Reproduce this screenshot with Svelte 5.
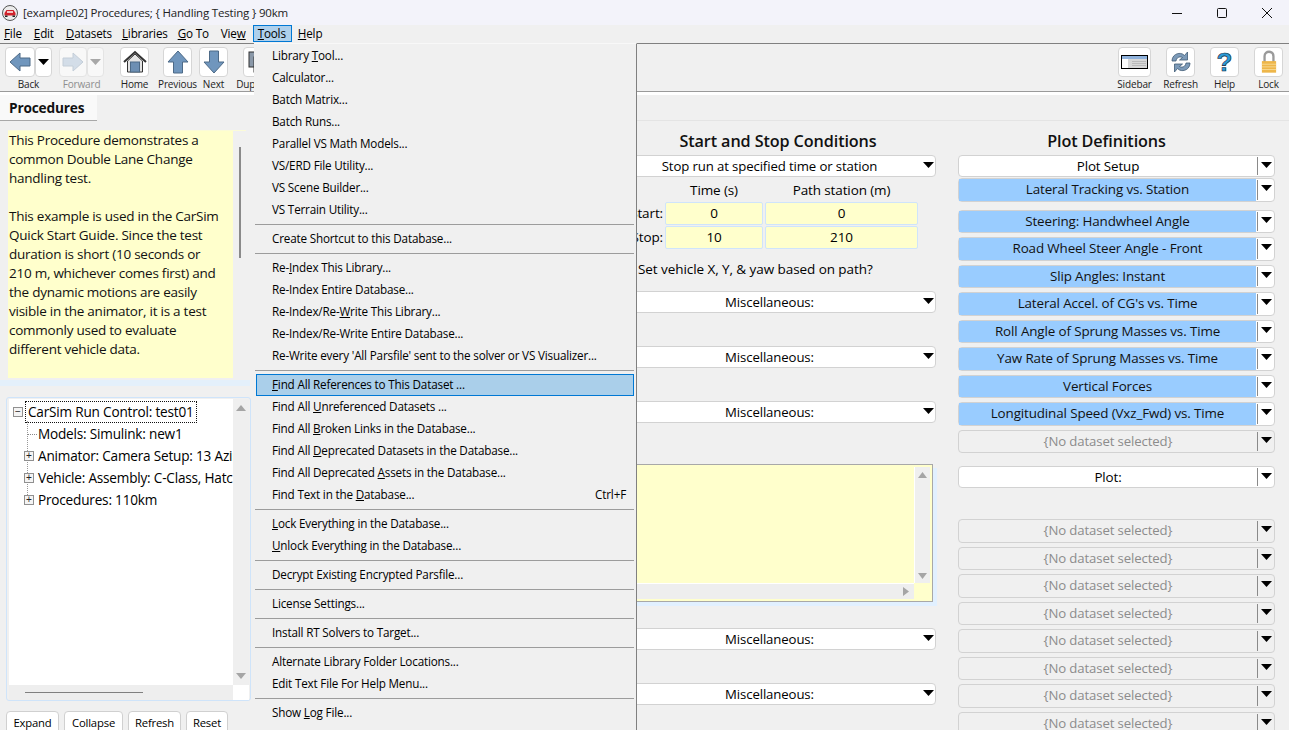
<script>
  const title = '[example02] Procedures; { Handling Testing } 90km';
  const menus = [['F','ile'],['E','dit'],['D','atasets'],['L','ibraries'],['G','o To'],['Vie','w',''],['T','ools'],['H','elp']];
  const S = 'sep';
  const items = [
    ['Library ','T','ool...'],['Calculator...'],['Batch Matrix...'],['Batch Runs...'],['Parallel VS Math Models...'],['VS/ERD File Utility...'],['VS Scene Builder...'],['VS Terrain Utility...'],S,
    ['Create Shortcut to this Database...'],S,
    ['Re-','I','ndex This Library...'],['Re-Index Entire Database...'],['Re-Index/Re-','W','rite This Library...'],['Re-Index/Re-Write Entire Database...'],["Re-Write every 'All Parsfile' sent to the solver or VS Visualizer..."],S,
    ['','F','ind All References to This Dataset ...'],['Find All ','U','nreferenced Datasets ...'],['Find All ','B','roken Links in the Database...'],['Find All ','D','eprecated Datasets in the Database...'],['Find All Deprecated ','A','ssets in the Database...'],['Find Text in the ','D','atabase...'],S,
    ['','L','ock Everything in the Database...'],['','U','nlock Everything in the Database...'],S,
    ['Decrypt Existing Encrypted Parsfile...'],S,['License Settings...'],S,['Install RT Solvers to Target...'],S,
    ['Alternate Library Folder Locations...'],['Edit Text File For Help Menu...'],S,['Show ','L','og File...']
  ];
  const plots = ['Steering: Handwheel Angle','Road Wheel Steer Angle - Front','Slip Angles: Instant',"Lateral Accel. of CG's vs. Time",'Roll Angle of Sprung Masses vs. Time','Yaw Rate of Sprung Masses vs. Time','Vertical Forces','Longitudinal Speed (Vxz_Fwd) vs. Time'];
  const none = '{No dataset selected}';
  const blanks = Array(8).fill(none);
  const descLines = ['This Procedure demonstrates a','common Double Lane Change','handling test.','','This example is used in the CarSim','Quick Start Guide. Since the test','duration is short (10 seconds or','210 m, whichever comes first) and','the dynamic motions are easily','visible in the animator, it is a test','commonly used to evaluate','different vehicle data.'];
</script>

{#snippet arrow(color = '#000')}
  <svg class="tri" width="11" height="6" viewBox="0 0 11 6"><path d="M0 0H11L5.5 6Z" fill={color}/></svg>
{/snippet}

{#snippet select(text, kind = '', divider = true)}
  <div class="select {kind}">
    <div class="val">{text}</div>
    <div class="drop" class:div={divider}>{@render arrow()}</div>
  </div>
{/snippet}

<div class="app">
  <header class="titlebar">
    <svg class="logo" width="16" height="16" viewBox="0 0 16 16">
      <circle cx="8" cy="8" r="7.5" fill="#ececec" stroke="#555"/>
      <path d="M2.5 10.5V8L4.5 5H11.5L13.5 8V10.5Z" fill="#d0202a"/>
      <rect x="5" y="6" width="6" height="2" fill="#f4c0c0"/>
      <rect x="3" y="10.5" width="2.5" height="1.5" fill="#222"/><rect x="10.5" y="10.5" width="2.5" height="1.5" fill="#222"/>
    </svg>
    <span class="wintitle">{title}</span>
    <div class="winctl">
      <svg width="12" height="12" viewBox="0 0 12 12"><path d="M1 6.5H11" stroke="#111"/></svg>
      <svg width="12" height="12" viewBox="0 0 12 12"><rect x="1.5" y="1.5" width="9" height="9" rx="1" fill="none" stroke="#111"/></svg>
      <svg width="12" height="12" viewBox="0 0 12 12"><path d="M1 1L11 11M11 1L1 11" stroke="#111"/></svg>
    </div>
  </header>

  <nav class="menubar">
    {#each menus as m, i}
      <span class="mi" class:active={m[0] === 'T'}>{#if m.length === 3}{m[0]}<u>{m[1]}</u>{:else}<u>{m[0]}</u>{m[1]}{/if}</span>
    {/each}
  </nav>

  <div class="toolbar">
    <div class="tool w47">
      <div class="pair">
        <div class="btn">
          <svg width="22" height="20" viewBox="0 0 22 20"><path d="M1 10L11 1V6H21V14H11V19Z" fill="#7096bd" stroke="#4d6a87"/></svg>
        </div>
        <div class="btn small">{@render arrow()}</div>
      </div>
      <span>Back</span>
    </div>
    <div class="tool w45 off">
      <div class="pair">
        <div class="btn">
          <svg width="22" height="20" viewBox="0 0 22 20"><path d="M21 10L11 1V6H1V14H11V19Z" fill="#d3dde8" stroke="#c4ced8"/></svg>
        </div>
        <div class="btn small">{@render arrow('#a8a8a8')}</div>
      </div>
      <span>Forward</span>
    </div>
    <div class="tool w29 g16">
      <div class="btn">
        <svg width="24" height="24" viewBox="0 0 24 24"><path d="M1 12L12 2L23 12" fill="none" stroke="#333" stroke-width="2"/><path d="M4.5 11L12 4L19.500 11V22H4.500Z" fill="#e4e4e4" stroke="#333"/><rect x="7.500" y="12" width="9" height="10" fill="#6d8fb3" stroke="#4d6a87"/></svg>
      </div>
      <span>Home</span>
    </div>
    <div class="tool w29 g14">
      <div class="btn">
        <svg width="22" height="24" viewBox="0 0 22 24"><path d="M11 1L21 12H15.500V23H6.500V12H1Z" fill="#7096bd" stroke="#4d6a87"/></svg>
      </div>
      <span>Previous</span>
    </div>
    <div class="tool w29 g7">
      <div class="btn">
        <svg width="22" height="24" viewBox="0 0 22 24"><path d="M11 23L21 12H15.500V1H6.500V12H1Z" fill="#7096bd" stroke="#4d6a87"/></svg>
      </div>
      <span>Next</span>
    </div>
    <div class="tool w29 g15">
      <div class="btn">
        <svg width="20" height="22" viewBox="0 0 20 22"><rect x="1" y="1" width="12" height="15" fill="#8a98a8" stroke="#333"/><rect x="6" y="6" width="12" height="15" fill="#dfe6ee" stroke="#333"/></svg>
      </div>
      <span>Duplicate</span>
    </div>

    <div class="tool w33 push">
      <div class="btn">
        <svg width="27" height="14" viewBox="0 0 27 14"><rect x=".5" y=".5" width="26" height="13" fill="#fff" stroke="#000"/><rect x="1" y="1" width="25" height="3" fill="#8fb2dc"/><rect x="7" y="4" width="19" height="9" fill="#d8d8d8"/><path d="M11 6.500H25M11 8.500H25M11 10.500H25" stroke="#bbb"/></svg>
      </div>
      <span>Sidebar</span>
    </div>
    <div class="tool w29 g15">
      <div class="btn">
        <svg width="22" height="22" viewBox="0 0 22 22"><path d="M2 10C2 4 8 1 12.500 3L14.500 4.500L17.500 1V9H9.500L12.500 6.500C9.500 5 6.500 6.500 6 10Z" fill="#7c9ab8" stroke="#3f5a75" stroke-width=".8"/><path d="M20 12C20 18 14 21 9.500 19L7.500 17.500L4.500 21V13H12.500L9.500 15.500C12.500 17 15.500 15.500 16 12Z" fill="#7c9ab8" stroke="#3f5a75" stroke-width=".8"/></svg>
      </div>
      <span>Refresh</span>
    </div>
    <div class="tool w29 g15">
      <div class="btn">
        <span class="qmark">?</span>
      </div>
      <span>Help</span>
    </div>
    <div class="tool w29 g15">
      <div class="btn">
        <svg width="16" height="24" viewBox="0 0 18 26"><path d="M4 13V6.500C4 3 6.500 1.500 9 1.500S14 3 14 6.500V13" fill="none" stroke="#9a9a9a" stroke-width="2.600"/><rect x="1" y="12" width="16" height="13" fill="#eeb649"/><path d="M1 15.500H17M1 18.500H17M1 21.500H17" stroke="#f8dc98"/></svg>
      </div>
      <span>Lock</span>
    </div>
  </div>

  <div class="workspace">
    <aside class="side">
      <div class="tab">Procedures</div>
      <div class="desc">
        <div class="desctext">
          {#each descLines as l}<div class="dl">{l}</div>{/each}
        </div>
        <div class="descbar"><i></i></div>
      </div>
      <div class="splitter"></div>
      <div class="tree">
        <div class="treebody">
          <div class="rows">
            <i class="vdots"></i>
            <div class="row root"><b class="box">−</b><span class="focus">CarSim Run Control: test01</span></div>
            <div class="row child"><i class="dash"></i><span>Models: Simulink: new1</span></div>
            <div class="row child"><b class="box">+</b><span>Animator: Camera Setup: 13 Azimuth</span></div>
            <div class="row child"><b class="box">+</b><span>Vehicle: Assembly: C-Class, Hatchback</span></div>
            <div class="row child"><b class="box">+</b><span>Procedures: 110km</span></div>
          </div>
          <div class="vbar">
            <svg width="10" height="6" viewBox="0 0 10 6"><path d="M0 6H10L5 0Z" fill="#a5a5a5"/></svg>
            <svg width="10" height="6" viewBox="0 0 10 6"><path d="M0 0H10L5 6Z" fill="#a5a5a5"/></svg>
          </div>
        </div>
        <div class="treefoot"><div class="hbar"><i></i></div><div class="corner"></div></div>
      </div>
      <div class="sidebtns">
        <div class="sb e">Expand</div><div class="sb c">Collapse</div><div class="sb r">Refresh</div><div class="sb z">Reset</div>
      </div>
    </aside>

    <main class="content">
      <div class="strip"></div>
      <div class="cols">
        <section class="mid">
          <h2>Start and Stop Conditions</h2>
          {@render select('Stop run at specified time or station', 'tall', false)}
          <div class="times">
            <span></span><span class="hd">Time (s)</span><span class="hd">Path station (m)</span>
            <span class="lb">Start:</span><div class="inp">0</div><div class="inp">0</div>
            <span class="lb">Stop:</span><div class="inp">10</div><div class="inp">210</div>
          </div>
          <div class="setv">Set vehicle X, Y, &amp; yaw based on path?</div>
          <div class="miscs first">
            {#each [1,2,3] as _}{@render select('Miscellaneous:', 'tall', false)}{/each}
          </div>
          <div class="memo">
            <div class="memotext"></div>
            <div class="memov">
              <svg width="9" height="6" viewBox="0 0 9 6"><path d="M0 6H9L4.500 0Z" fill="#a5a5a5"/></svg>
              <svg width="9" height="6" viewBox="0 0 9 6"><path d="M0 0H9L4.500 6Z" fill="#a5a5a5"/></svg>
            </div>
            <div class="memoh"><svg width="6" height="9" viewBox="0 0 6 9"><path d="M0 0V9L6 4.500Z" fill="#a5a5a5"/></svg></div>
            <div></div>
          </div>
          <div class="miscs second">
            {#each [1,2] as _}{@render select('Miscellaneous:', 'tall', false)}{/each}
          </div>
        </section>

        <section class="right">
          <h2>Plot Definitions</h2>
          {@render select('Plot Setup', 'tall')}
          <div class="lat">{@render select('Lateral Tracking vs. Station', 'blue')}</div>
          <div class="stack s1">
            {#each plots as p}{@render select(p, 'blue')}{/each}
            {@render select(none, 'none')}
          </div>
          <div class="plotsel">{@render select('Plot:', 'tall')}</div>
          <div class="stack s2">
            {#each blanks as b}{@render select(b, 'none')}{/each}
          </div>
        </section>
      </div>
    </main>
  </div>

  <div class="menu">
    {#each items as it}
      {#if it === S}
        <div class="msep"></div>
      {:else}
        <div class="mitem" class:hot={it[1] === 'F'}>
          <span>{it[0]}{#if it[1]}<u>{it[1]}</u>{it[2]}{/if}</span>
          {#if it[0] === 'Find Text in the '}<span class="short">Ctrl+F</span>{/if}
        </div>
      {/if}
    {/each}
  </div>
</div>

<style>
  :global(body) { margin: 0; }
  .app { position: relative; width: 1289px; height: 730px; overflow: hidden; background: #f0f0f0; color: #000; font: 11.7px/16px "Open Sans", "Noto Sans", sans-serif; letter-spacing: -0.18px; }
  u { text-underline-offset: 1px; text-decoration-thickness: 1px; }
  h2 { margin: 10px 0 4px; font-size: 16.2px; line-height: 20px; font-weight: 600; text-align: center; color: #111; letter-spacing: -0.1px; }
  .right h2 { padding-right: 20px; }

  .titlebar { height: 25px; background: #f3f3fa; display: flex; align-items: center; padding-left: 2px; box-sizing: border-box; }
  .logo { margin-right: 5px; }
  .wintitle { font-size: 11.5px; color: #222; }
  .winctl { margin-left: auto; display: flex; gap: 33px; padding-right: 16px; }

  .menubar { height: 18px; display: flex; align-items: flex-start; padding-left: 0; }
  .mi { padding: 0 3px; margin-right: 4px; line-height: 15px; border: 1px solid transparent; height: 17px; box-sizing: border-box; }
  .mi:nth-child(3), .mi:nth-child(4) { margin-right: 2px; }
  .mi.active { background: #aed0ec; border-color: #0078d4; padding: 0 5px 0 4px; margin-left: -1px; margin-right: 2px; }

  .toolbar { height: 44px; border-top: 1px solid #808080; border-bottom: 1px solid #9a9a9a; display: flex; padding: 3px 6px 0 5px; box-sizing: content-box; }
  .tool { display: flex; flex-direction: column; align-items: center; flex: none; height: 44px; font-size: 10px; line-height: 14px; white-space: nowrap; }
  .tool > span { letter-spacing: -0.15px; color: #222; }
  .tool.off > span { color: #8e8e8e; }
  .w47 { width: 47px; } .w45 { width: 45px; margin-left: 7px; } .w29 { width: 29px; } .w33 { width: 33px; }
  .g16 { margin-left: 16px; } .g14 { margin-left: 14px; } .g7 { margin-left: 7px; } .g15 { margin-left: 15px; }
  .push { margin-left: auto; }
  .pair { display: flex; width: 100%; }
  .btn { flex: 1; width: 100%; height: 30px; box-sizing: border-box; background: #fff; border: 1px solid #d6d6d6; border-radius: 4px; display: flex; align-items: center; justify-content: center; }
  .pair .btn { flex: 1 1 auto; width: auto; }
  .pair .btn.small { flex: 0 0 17px; }
  .off .btn { background: #f8f8f8; border-color: #e4e4e4; }
  .qmark { font: 700 26px/28px "Liberation Sans", sans-serif; color: #2c9ad6; -webkit-text-stroke: .6px #123; letter-spacing: 0; }

  .workspace { display: flex; height: 638px; border-top: 3px solid #fff; box-sizing: content-box; }
  .side { width: 254px; flex: none; }
  .tab { width: 97px; height: 26px; background: #f9f9f9; font-weight: 700; font-size: 13.7px; line-height: 26px; padding-left: 9px; box-sizing: border-box; border-bottom: 1px solid #a8a8a8; color: #111; }
  .desc { margin: 9px 0 0 8px; width: 238px; height: 248px; display: flex; border-top: 1px solid #fbfbd8; box-sizing: border-box; }
  .desctext { width: 225px; background: #ffffcc; font-size: 13.5px; line-height: 19px; padding: 0 0 0 1px; box-sizing: border-box; letter-spacing: -0.25px; }
  .dl { min-height: 19px; white-space: nowrap; color: #111; }
  .descbar { flex: 1; display: flex; justify-content: center; padding-top: 16px; }
  .descbar i { width: 2px; height: 111px; background: #8a8a8a; }
  .splitter { height: 6px; margin-top: 2px; background: #e4f0fb; width: 250px; }
  .tree { margin: 11px 0 0 6px; width: 245px; height: 304px; border: 1px solid #cfe4fa; border-radius: 3px; box-sizing: border-box; padding: 1px 1px 0 2px; display: flex; flex-direction: column; }
  .treebody { flex: 1; display: flex; min-height: 0; }
  .rows { position: relative; width: 224px; background: #fff; overflow: hidden; font-size: 13.6px; padding-top: 2px; letter-spacing: -0.2px; }
  .row { display: flex; align-items: center; height: 22px; white-space: nowrap; position: relative; }
  .root { padding-left: 4px; }
  .child { padding-left: 15px; }
  .root > span { margin-left: 3px; outline: 1px dotted #111; padding: 0 2px; line-height: 20px; }
  .child > span { margin-left: 4px; }
  .box { flex: none; width: 8px; height: 8px; border: 1px solid #909090; background: #f4f4f4; font: 400 10px/7px "Liberation Sans", sans-serif; text-align: center; color: #222; position: relative; letter-spacing: 0; }
  .dash { width: 10px; margin-left: 3px; border-top: 1px dotted #888; margin-right: -3px; }
  .vdots { position: absolute; left: 18px; top: 22px; height: 80px; border-left: 1px dotted #999; }
  .vbar { flex: 1; background: #efefef; display: flex; flex-direction: column; justify-content: space-between; align-items: center; padding: 6px 0; }
  .treefoot { height: 15px; display: flex; }
  .hbar { width: 224px; background: #eee; padding: 7px 0 0 16px; box-sizing: border-box; }
  .hbar i { display: block; width: 118px; height: 1px; background: #808080; }
  .corner { flex: 1; background: #fff; }
  .sidebtns { display: flex; margin: 10px 0 0 6px; gap: 5px; }
  .sb { background: #fff; border: 1px solid #d0d0d0; border-radius: 4px; height: 26px; box-sizing: border-box; font-size: 11.3px; line-height: 21px; text-align: center; }
  .e { width: 53px; } .c { width: 59px; } .r { width: 53px; } .z { width: 42px; }

  .content { flex: 1; min-width: 0; }
  .strip { height: 26px; border-bottom: 1px solid #e4e4e4; box-sizing: border-box; }
  .cols { display: flex; padding-left: 366px; gap: 22px; }
  .mid { width: 316px; font-size: 13.5px; letter-spacing: -0.12px; }
  .mid .val { font-size: 13.2px; }
  .right { width: 317px; font-size: 13.4px; letter-spacing: -0.12px; }

  .select { display: flex; height: 23.5px; box-sizing: border-box; background: #fff; border: 1px solid #d2d2d2; border-radius: 4px; line-height: 21px; }
  .select.tall { height: 22px; line-height: 20px; }
  .val { flex: 1; text-align: center; white-space: nowrap; overflow: hidden; }
  .drop { flex: none; width: 17px; display: flex; justify-content: center; align-items: center; padding-bottom: 3px; box-sizing: border-box; }
  .mid .drop { padding-left: 4px; }
  .drop.div { border-left: 1px solid #8a8a8a; margin: 1px 0; }
  .tri { display: block; }
  .blue .val { background: #99ccff; margin-right: 1px; color: #111; }
  .none { background: #f0f0f0; }
  .none .val { color: #8c8c8c; font-size: 13.2px; }
  .lat { margin-top: 1px; }

  .times { display: grid; grid-template-columns: 43px 98px 153px; column-gap: 2px; grid-template-rows: 23px 23px 23px; row-gap: 1px; height: 71px; margin-top: 1px; }
  .hd { text-align: center; line-height: 24px; }
  .lb { text-align: right; line-height: 23px; }
  .inp { background: #ffffcc; border: 1px solid #cfe4fb; border-radius: 2px; text-align: center; line-height: 21px; box-sizing: border-box; }
  .setv { margin: 10px 0 0 18px; line-height: 20px; white-space: nowrap; letter-spacing: -0.07px; }
  .miscs { display: flex; flex-direction: column; gap: 33px; }
  .miscs.first { margin-top: 12px; }
  .miscs.second { margin-top: 26px; }
  .memo { margin-top: 41px; width: 313px; height: 138px; box-sizing: border-box; border: 1px solid #a8a8a8; box-shadow: 4px 4px 0 #e1f0ff; background: #ffffcc; padding: 2px; display: grid; grid-template-columns: 1fr 16px; grid-template-rows: 1fr 16px; }
  .memov { background: #efefef; border-left: 1px solid #fff; display: flex; flex-direction: column; align-items: center; justify-content: space-between; padding: 5px 0 4px; }
  .memoh { background: #eeeeee; border-top: 1px solid #fff; display: flex; justify-content: flex-end; align-items: center; padding-right: 5px; }

  .stack { display: flex; flex-direction: column; gap: 4px; }
  .stack.s1 { margin-top: 8px; }
  .plotsel { margin-top: 13px; }
  .stack.s2 { margin-top: 31px; }
  .right .none { height: 23.5px; }

  .menu { position: absolute; left: 254px; top: 43px; width: 382px; height: 687px; background: #f0f0f0; border-top: 1px solid #f8f8f8; border-right: 1px solid #808080; padding-top: 1px; box-sizing: content-box; }
  .mitem { height: 22px; display: flex; align-items: center; justify-content: space-between; padding: 0 8px 2px 18px; box-sizing: border-box; white-space: nowrap; margin: 0 2px 0 0; }
  .mitem.hot { background: #aacfea; outline: 1px solid #0078d4; outline-offset: -1px; margin: 0 2px; padding-left: 16px; }
  .msep { height: 1px; margin: 3px 2px 3px 1px; background: #9c9c9c; }
</style>
